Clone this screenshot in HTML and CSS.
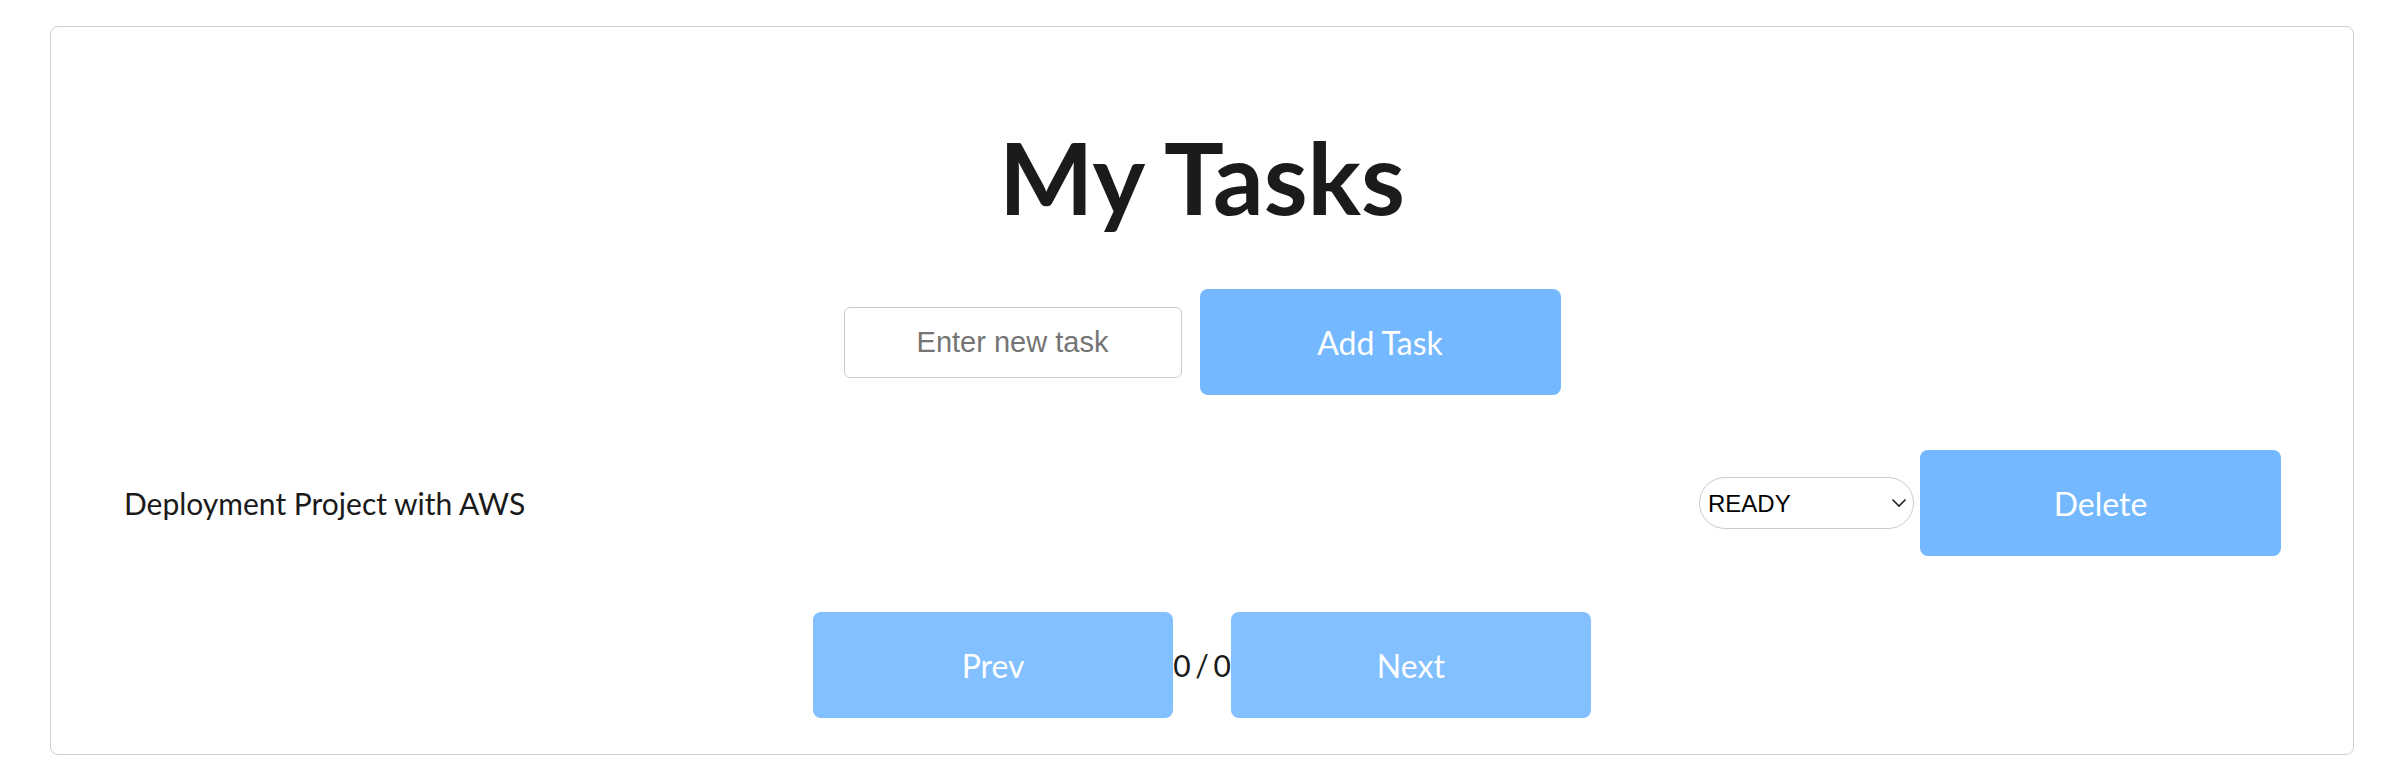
FILE: index.html
```html
<!DOCTYPE html>
<html lang="en">
<head>
<meta charset="utf-8">
<title>My Tasks</title>
<link rel="stylesheet" href="styles.css">
</head>
<body>
<div class="card">
  <h1 class="title">My Tasks</h1>
  <div class="add-row">
    <input class="task-input" type="text" placeholder="Enter new task">
    <button class="btn">Add Task</button>
  </div>
  <ul class="task-list">
    <li class="task">
      <span class="task-name">Deployment Project with AWS</span>
      <span class="select-wrap">
        <select class="status">
          <option>READY</option>
          <option>IN PROGRESS</option>
          <option>DONE</option>
        </select>
        <svg class="chevron" width="16" height="10" viewBox="0 0 16 10"><path d="M1.5 1.5 L8 8 L14.5 1.5" fill="none" stroke="#222" stroke-width="1.6"/></svg>
      </span>
      <button class="btn">Delete</button>
    </li>
  </ul>
  <div class="pager">
    <button class="btn btn-soft">Prev</button>
    <span class="page-info">0 / 0</span>
    <button class="btn btn-soft">Next</button>
  </div>
</div>
</body>
</html>
```
FILE: styles.css
```css
html, body {
  margin: 0;
  padding: 0;
  background: #fff;
}
body {
  font-family: Lato, "Noto Sans", sans-serif;
  color: #1a1a1a;
}
.card {
  box-sizing: border-box;
  width: 2304px;
  margin: 26px 0 0 50px;
  border: 1px solid #cfcfcf;
  border-radius: 8px;
  padding: 100px 0 36px;
  display: flex;
  flex-direction: column;
  align-items: center;
}
.title {
  margin: 0;
  font-size: 100px;
  line-height: 99px;
  font-weight: 700;
  color: #1b1b1b;
}
.add-row {
  margin-top: 63px;
  display: flex;
  align-items: center;
  gap: 18px;
}
.task-input {
  box-sizing: border-box;
  width: 338px;
  height: 71px;
  border: 1px solid #cccccc;
  border-radius: 6px;
  font-family: "Liberation Sans", Arial, sans-serif;
  font-size: 29px;
  text-align: center;
  color: #222;
  outline: none;
  padding: 0 10px;
}
.task-input::placeholder {
  color: #757575;
}
.btn {
  box-sizing: border-box;
  width: 361px;
  height: 106px;
  border: none;
  border-radius: 8px;
  background: #74b9ff;
  color: #fff;
  font-family: Lato, "Noto Sans", sans-serif;
  font-size: 32px;
  font-weight: 400;
  cursor: pointer;
  padding: 0;
}
.btn-soft {
  width: 360px;
  background: #82c0ff;
}
.task-list {
  list-style: none;
  margin: 55px 0 0;
  padding: 0 72px 0 73px;
  align-self: stretch;
}
.task {
  display: flex;
  align-items: center;
}
.task-name {
  flex: 1;
  font-size: 30px;
  color: #1a1a1a;
}
.select-wrap {
  position: relative;
  display: inline-flex;
  margin-right: 6px;
}
.status {
  appearance: none;
  -webkit-appearance: none;
  box-sizing: border-box;
  width: 215px;
  height: 52px;
  border: 1px solid #cccccc;
  border-radius: 26px;
  background: #fff;
  color: #000;
  font-family: "Liberation Sans", Arial, sans-serif;
  font-size: 24px;
  padding: 0 30px 0 8px;
  outline: none;
}
.chevron {
  position: absolute;
  right: 7px;
  top: 21px;
  pointer-events: none;
}
.pager {
  margin-top: 56px;
  display: flex;
  align-items: center;
}
.page-info {
  font-size: 30px;
  word-spacing: -3px;
  color: #1a1a1a;
}
```
